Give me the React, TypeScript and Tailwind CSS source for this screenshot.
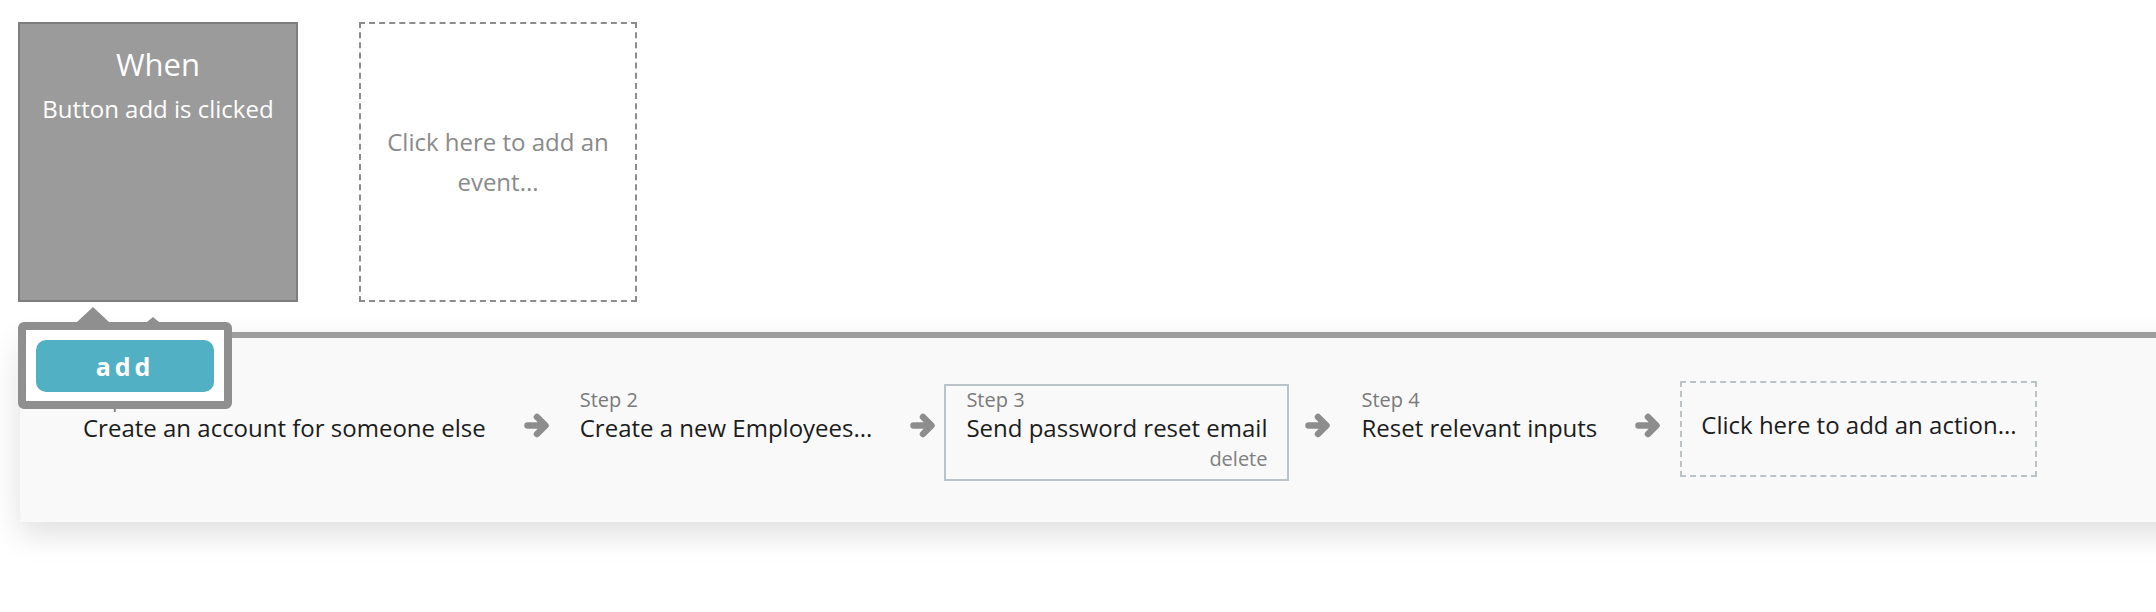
import React from 'react';

const ArrowRight = () => (
  <svg viewBox="0 0 26 27" className="w-[26px] h-[27px] shrink-0">
    <path
      d="M3.5 13.5 H20 M13 5 L21.5 13.5 L13 22"
      fill="none"
      stroke="#8d8d8d"
      strokeWidth="6.5"
      strokeLinecap="round"
      strokeLinejoin="round"
    />
  </svg>
);

interface StepProps {
  label: string;
  title: string;
  selected?: boolean;
}

const Step: React.FC<StepProps> = ({ label, title, selected }) => (
  <div
    className={`shrink-0 border-2 px-[20px] pt-[1px] ${
      selected ? 'border-[#b9c3c8] pb-[7px]' : 'border-transparent'
    }`}
  >
    <div className="text-[20px] leading-[26px] text-[#7a7a7a]">{label}</div>
    <div className="text-[24px] leading-[30px] text-[#1c1c1c] whitespace-nowrap">{title}</div>
    {selected && (
      <div className="mt-[3px] text-right text-[20px] leading-[26px] text-[#808080]">delete</div>
    )}
  </div>
);

const Arrow = () => (
  <div className="shrink-0 ml-[16px] mr-[8px] mt-[28px]">
    <ArrowRight />
  </div>
);

export default function App() {
  return (
    <div
      className="relative w-full h-[612px] bg-white overflow-hidden"
      style={{ fontFamily: '"Open Sans", "Noto Sans", sans-serif' }}
    >
      {/* Event row */}
      <div className="flex pt-[22px] pl-[18px]">
        <div className="w-[280px] h-[280px] bg-[#9b9b9b] border-2 border-[#7e7e7e] text-white text-center pt-[20px]">
          <div className="text-[31px] leading-[40px]">When</div>
          <div className="mt-[10px] text-[24px] leading-[30px] whitespace-nowrap">Button add is clicked</div>
        </div>
        <div className="ml-[61px] w-[278px] h-[280px] border-2 border-dashed border-[#8c8c8c] flex items-center justify-center px-[20px]">
          <p className="text-center text-[24px] leading-[40px] text-[#8a8a8a]">Click here to add an event...</p>
        </div>
      </div>

      {/* Actions panel */}
      <div className="mt-[30px] ml-[20px] w-[2200px] h-[190px] bg-[#f9f9f9] border-t-[6px] border-[#9d9d9d] shadow-[0_12px_30px_rgba(0,0,0,0.13)]">
        <div className="flex items-start pt-[46px] pl-[41px]">
          <Step label="Step 1" title="Create an account for someone else" />
          <Arrow />
          <Step label="Step 2" title="Create a new Employees..." />
          <Arrow />
          <Step label="Step 3" title="Send password reset email" selected />
          <Arrow />
          <Step label="Step 4" title="Reset relevant inputs" />
          <div className="shrink-0 ml-[16px] mt-[28px]">
            <ArrowRight />
          </div>
          <div className="shrink-0 ml-[19px] -mt-[3px] w-[357px] h-[96px] border-2 border-dashed border-[#bcc3c7] pl-[19px] pt-[27px]">
            <span className="text-[24px] leading-[30px] text-[#1c1c1c] whitespace-nowrap">Click here to add an action...</span>
          </div>
        </div>
      </div>

      {/* Element popup for the "add" button */}
      <div className="absolute left-[18px] top-[307px]">
        <div className="flex items-end h-[15px]">
          <div className="ml-[59px] w-0 h-0 border-l-[16px] border-r-[16px] border-b-[15px] border-l-transparent border-r-transparent border-b-[#8f8f8f]" />
          <div className="ml-[38px] w-0 h-0 border-l-[6px] border-r-[6px] border-b-[5px] border-l-transparent border-r-transparent border-b-[#8f8f8f]" />
        </div>
        <div className="w-[214px] h-[87px] bg-white border-[8px] border-[#8f8f8f] rounded-[6px] pl-[10px] pt-[10px]">
          <button className="w-[178px] h-[52px] rounded-[10px] bg-[#52b0c4] text-white font-bold text-[25px] tracking-[4px] leading-none">
            add
          </button>
        </div>
      </div>
    </div>
  );
}
